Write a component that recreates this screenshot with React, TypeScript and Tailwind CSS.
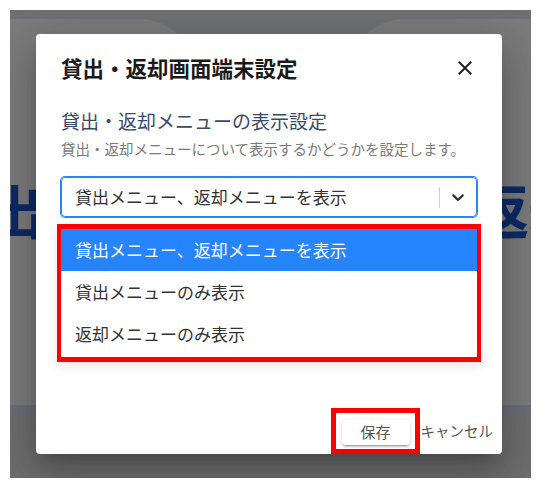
import React from "react";

const font = { fontFamily: '"Noto Sans CJK JP", "Noto Sans", sans-serif' };

const options = [
  "貸出メニュー、返却メニューを表示",
  "貸出メニューのみ表示",
  "返却メニューのみ表示",
];

const CloseIcon = () => (
  <svg width="24" height="24" viewBox="0 0 24 24" className="fill-[#222]">
    <path d="M19 6.41 17.59 5 12 10.59 6.41 5 5 6.41 10.59 12 5 17.59 6.41 19 12 13.41 17.59 19 19 17.59 13.41 12z" />
  </svg>
);

const Chevron = () => (
  <svg width="20" height="20" viewBox="0 0 20 20" className="fill-[#333]">
    <path d="M4.516 7.548c0.436-0.446 1.043-0.481 1.576 0l3.908 3.747 3.908-3.747c0.533-0.481 1.141-0.446 1.574 0 0.436 0.445 0.408 1.197 0 1.615-0.406 0.418-4.695 4.502-4.695 4.502-0.217 0.223-0.502 0.335-0.787 0.335s-0.57-0.112-0.789-0.335c0 0-4.287-4.084-4.695-4.502s-0.436-1.17 0-1.615z" />
  </svg>
);

// page behind the modal (dimmed by the backdrop)
const Background = () => (
  <div className="flex h-full w-full flex-col bg-[#dfe1e6]">
    <div className="h-[9px] shrink-0" />
    <div className="flex h-[386px] shrink-0 justify-between">
      <div className="-ml-[120px] flex w-[305px] items-start rounded-tr-[56px] bg-[#f7f7f7] pt-[156px]">
        <span className="ml-[38px] whitespace-nowrap text-[58px] font-bold leading-[68px] text-[#1a55cc]">貸出</span>
      </div>
      <div className="-mr-[120px] flex w-[302px] items-start rounded-tl-[56px] bg-[#f7f7f7] pt-[156px]">
        <span className="ml-[122px] whitespace-nowrap text-[58px] font-bold leading-[68px] text-[#1a55cc]">返却</span>
      </div>
    </div>
    <div className="h-[8px] shrink-0 bg-[#d6daf6]" />
    <div className="flex-1 bg-[#dcdcdc]" />
  </div>
);

export default function App() {
  return (
    <div className="h-[488px] w-[538px] bg-white pl-[10px] pt-[10px]" style={font}>
      <div className="relative h-[468px] w-[521px] overflow-hidden">
        <Background />

        <div className="absolute inset-0 flex items-center justify-center bg-black/50 pr-[3px]">
          <div className="flex h-[420px] w-[466px] flex-col rounded-[4px] bg-white shadow-[0_11px_15px_-7px_rgba(0,0,0,0.2),0_24px_38px_3px_rgba(0,0,0,0.14),0_9px_46px_8px_rgba(0,0,0,0.12)]">
            <div className="flex items-center justify-between px-[25px] pt-[18px]">
              <h2 className="text-[21.5px] font-bold leading-[32px] text-[#1a1a1a]">貸出・返却画面端末設定</h2>
              <button className="flex">
                <CloseIcon />
              </button>
            </div>

            <div className="flex flex-col px-[25px]">
              <p className="mt-[23px] text-[19px] leading-[28px] text-[#3a4b6a]">貸出・返却メニューの表示設定</p>
              <p className="mt-[4px] whitespace-nowrap text-[14.5px] leading-[20px] text-[#7a7a7a]">
                貸出・返却メニューについて表示するかどうかを設定します。
              </p>

              <div className="mt-[18px] flex h-[40px] items-center rounded-[4px] border border-[#2684ff] shadow-[0_0_0_1px_#2684ff]">
                <span className="flex-1 pl-[13px] text-[17px] text-[#333]">貸出メニュー、返却メニューを表示</span>
                <span className="h-[21px] w-px bg-[#ccc]" />
                <span className="flex px-[8px]">
                  <Chevron />
                </span>
              </div>

              <div className="-mx-[4px] mt-[7px] border-x-4 border-y-[5px] border-[#ff0000] bg-white pb-[2px] shadow-[0_4px_11px_rgba(0,0,0,0.1)]">
                {options.map((o, i) => (
                  <div
                    key={o}
                    className={
                      i === 0
                        ? "flex h-[42px] items-center bg-[#2684ff] px-[14px] text-[17px] text-white"
                        : "flex h-[42px] items-center px-[14px] text-[17px] text-[#333]"
                    }
                  >
                    {o}
                  </div>
                ))}
              </div>
            </div>

            <div className="mt-auto flex items-center justify-end pr-[9px]">
              <div className="flex h-[46px] w-[89px] items-start border-[5px] border-[#ff0000] pl-[6px] pt-[7px]">
                <button className="flex h-[25px] w-[68px] items-center justify-center rounded-[4px] bg-white text-[15px] text-[#555] shadow-[0_3px_1px_-2px_rgba(0,0,0,0.2),0_2px_2px_0_rgba(0,0,0,0.14),0_1px_5px_0_rgba(0,0,0,0.12)]">
                  保存
                </button>
              </div>
              <button className="ml-[1px] text-[14.5px] text-[#555]">キャンセル</button>
            </div>
          </div>
        </div>
      </div>
    </div>
  );
}
